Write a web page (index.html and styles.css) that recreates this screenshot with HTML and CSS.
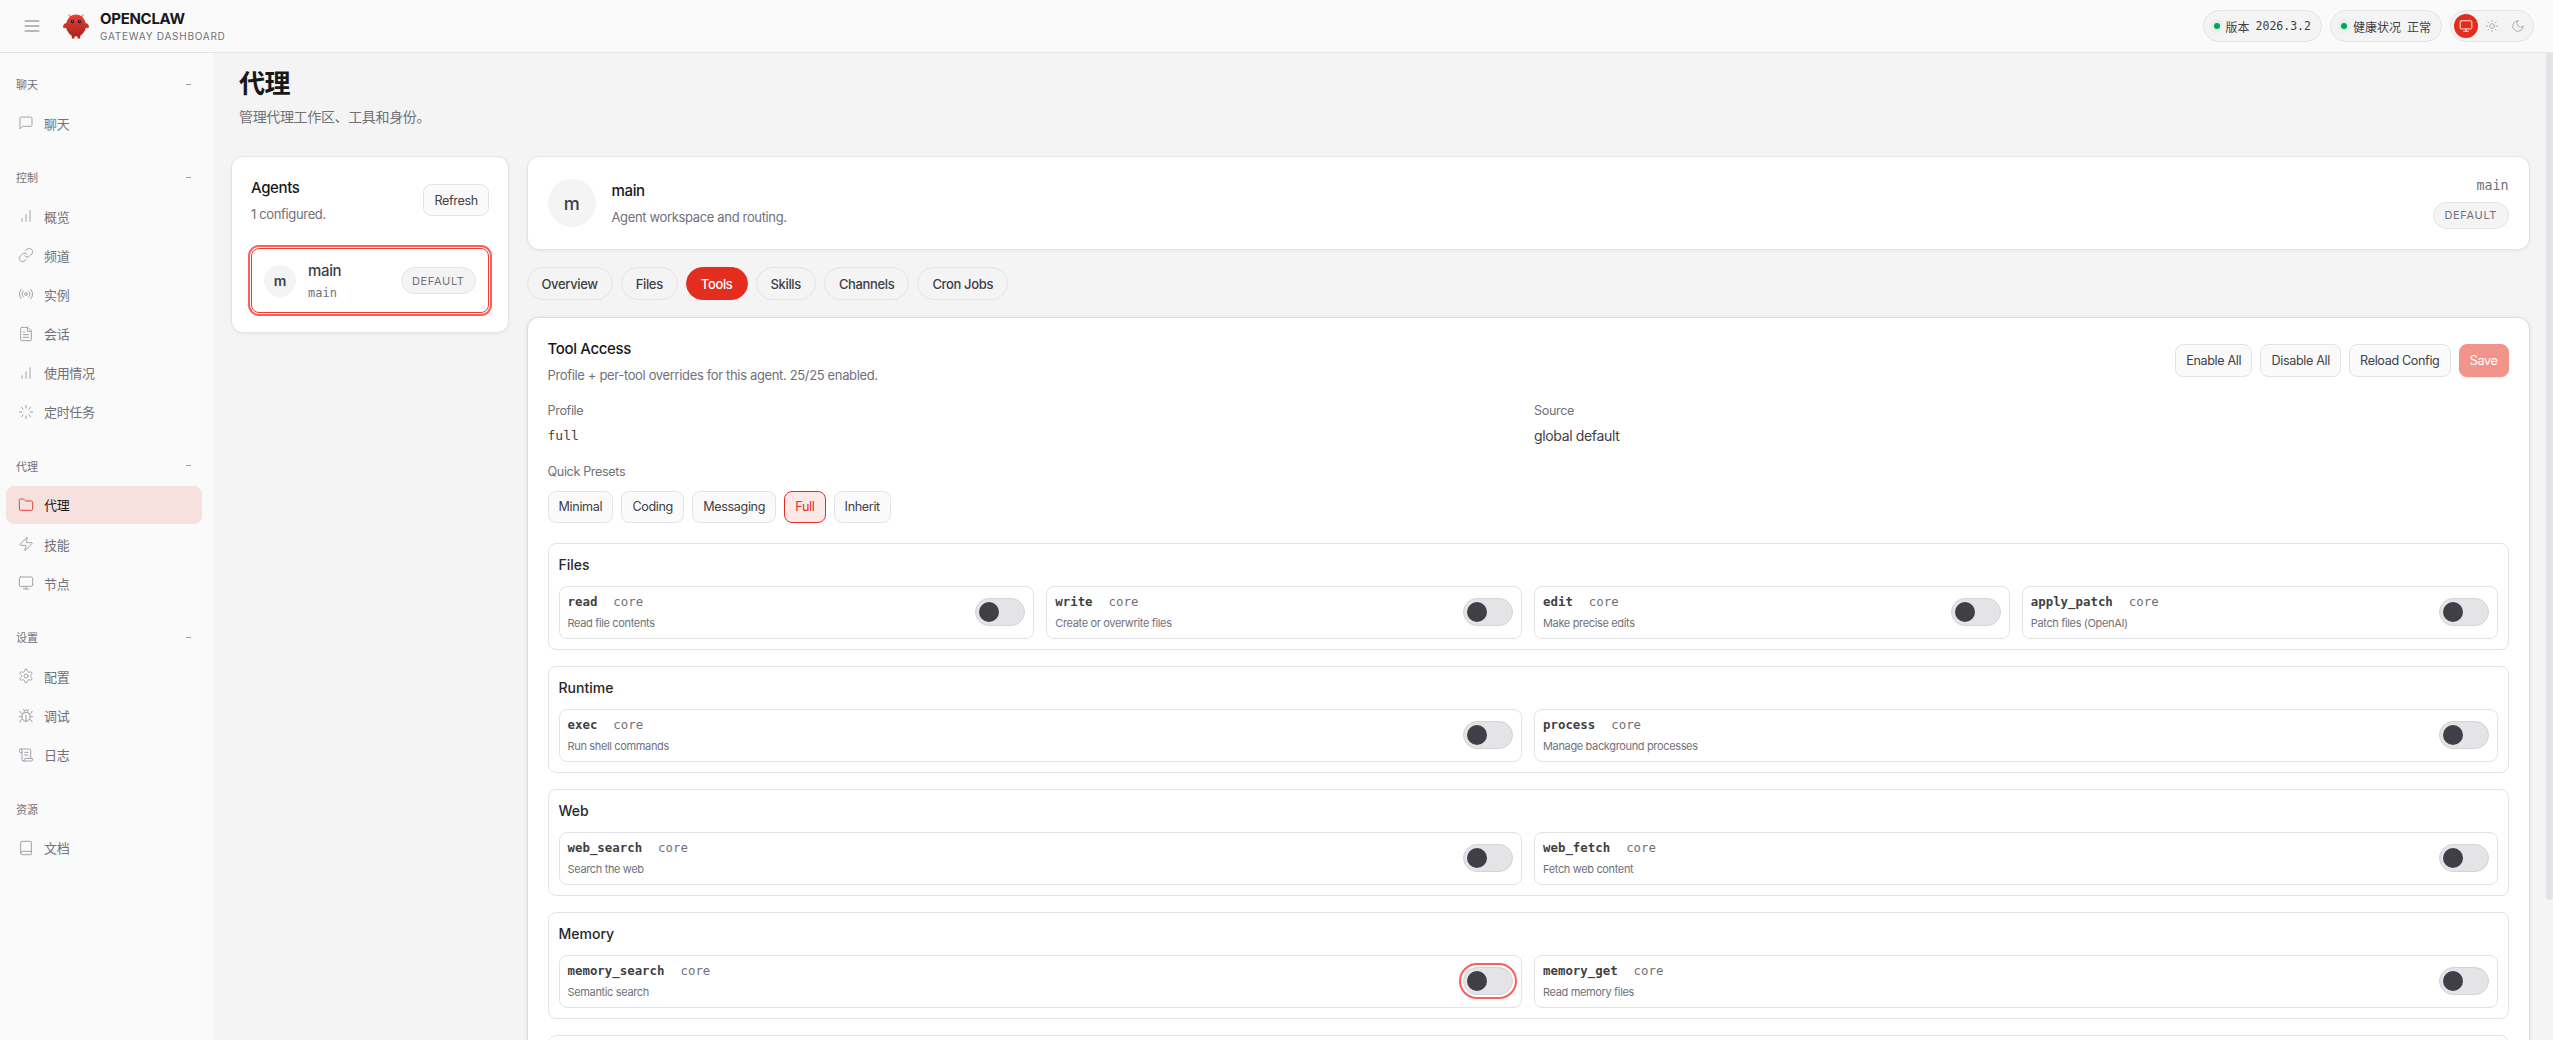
FILE: index.html
```html
<!DOCTYPE html>
<html lang="zh-CN">
<head>
    <meta charset="UTF-8">
    <title>OpenClaw Gateway Dashboard</title>
    <link rel="stylesheet" href="styles.css">
</head>
<body>
    <!-- icon sprite -->
    <svg class="sprite" xmlns="http://www.w3.org/2000/svg">
        <symbol id="i-menu" viewBox="0 0 24 24"><path d="M4 6h16M4 12h16M4 18h16"/></symbol>
        <symbol id="i-chat" viewBox="0 0 24 24"><path d="M21 15a2 2 0 0 1-2 2H7l-4 4V5a2 2 0 0 1 2-2h14a2 2 0 0 1 2 2z"/></symbol>
        <symbol id="i-bars" viewBox="0 0 24 24"><path d="M12 20V10M18 20V4M6 20v-4"/></symbol>
        <symbol id="i-link" viewBox="0 0 24 24"><path d="M10 13a5 5 0 0 0 7.54.54l3-3a5 5 0 0 0-7.07-7.07l-1.72 1.71"/><path d="M14 11a5 5 0 0 0-7.54-.54l-3 3a5 5 0 0 0 7.07 7.07l1.71-1.71"/></symbol>
        <symbol id="i-radio" viewBox="0 0 24 24"><circle cx="12" cy="12" r="2"/><path d="M4.93 19.07a10 10 0 0 1 0-14.14M7.76 16.24a6 6 0 0 1 0-8.49M16.24 7.76a6 6 0 0 1 0 8.49M19.07 4.93a10 10 0 0 1 0 14.14"/></symbol>
        <symbol id="i-file" viewBox="0 0 24 24"><path d="M14 2H6a2 2 0 0 0-2 2v16a2 2 0 0 0 2 2h12a2 2 0 0 0 2-2V8z"/><path d="M14 2v6h6M16 13H8M16 17H8M10 9H8"/></symbol>
        <symbol id="i-loader" viewBox="0 0 24 24"><path d="M12 2v4M12 18v4M4.93 4.93l2.83 2.83M16.24 16.24l2.83 2.83M2 12h4M18 12h4M4.93 19.07l2.83-2.83M16.24 7.76l2.83-2.83"/></symbol>
        <symbol id="i-folder" viewBox="0 0 24 24"><path d="M20 20a2 2 0 0 0 2-2V8a2 2 0 0 0-2-2h-7.9a2 2 0 0 1-1.69-.9L9.6 3.9A2 2 0 0 0 7.93 3H4a2 2 0 0 0-2 2v13a2 2 0 0 0 2 2Z"/></symbol>
        <symbol id="i-zap" viewBox="0 0 24 24"><path d="M4 14a1 1 0 0 1-.78-1.63l9.9-10.2a.5.5 0 0 1 .86.46l-1.92 6.02A1 1 0 0 0 13 10h7a1 1 0 0 1 .78 1.63l-9.9 10.2a.5.5 0 0 1-.86-.46l1.92-6.02A1 1 0 0 0 11 14z"/></symbol>
        <symbol id="i-monitor" viewBox="0 0 24 24"><rect x="2" y="3" width="20" height="14" rx="2"/><path d="M8 21h8M12 17v4"/></symbol>
        <symbol id="i-gear" viewBox="0 0 24 24"><path d="M12.22 2h-.44a2 2 0 0 0-2 2v.18a2 2 0 0 1-1 1.73l-.43.25a2 2 0 0 1-2 0l-.15-.08a2 2 0 0 0-2.73.73l-.22.38a2 2 0 0 0 .73 2.73l.15.1a2 2 0 0 1 1 1.72v.51a2 2 0 0 1-1 1.74l-.15.09a2 2 0 0 0-.73 2.73l.22.38a2 2 0 0 0 2.73.73l.15-.08a2 2 0 0 1 2 0l.43.25a2 2 0 0 1 1 1.73V20a2 2 0 0 0 2 2h.44a2 2 0 0 0 2-2v-.18a2 2 0 0 1 1-1.73l.43-.25a2 2 0 0 1 2 0l.15.08a2 2 0 0 0 2.73-.73l.22-.39a2 2 0 0 0-.73-2.73l-.15-.08a2 2 0 0 1-1-1.74v-.5a2 2 0 0 1 1-1.74l.15-.09a2 2 0 0 0 .73-2.73l-.22-.38a2 2 0 0 0-2.73-.73l-.15.08a2 2 0 0 1-2 0l-.43-.25a2 2 0 0 1-1-1.73V4a2 2 0 0 0-2-2z"/><circle cx="12" cy="12" r="3"/></symbol>
        <symbol id="i-bug" viewBox="0 0 24 24"><path d="m8 2 1.88 1.88M14.12 3.88 16 2M9 7.13v-1a3.003 3.003 0 1 1 6 0v1"/><path d="M12 20c-3.3 0-6-2.7-6-6v-3a4 4 0 0 1 4-4h4a4 4 0 0 1 4 4v3c0 3.3-2.7 6-6 6M12 20v-9M6.53 9C4.6 8.8 3 7.1 3 5M6 13H2M3 21c0-2.1 1.7-3.9 3.8-4M20.97 5c0 2.1-1.6 3.8-3.5 4M22 13h-4M17.2 17c2.1.1 3.8 1.9 3.8 4"/></symbol>
        <symbol id="i-scroll" viewBox="0 0 24 24"><path d="M15 12h-5M15 8h-5M19 17V5a2 2 0 0 0-2-2H4"/><path d="M8 21h12a2 2 0 0 0 2-2v-1a1 1 0 0 0-1-1H11a1 1 0 0 0-1 1v1a2 2 0 1 1-4 0V5a2 2 0 1 0-4 0v2a1 1 0 0 0 1 1h3"/></symbol>
        <symbol id="i-book" viewBox="0 0 24 24"><path d="M4 19.5v-15A2.5 2.5 0 0 1 6.5 2H19a1 1 0 0 1 1 1v18a1 1 0 0 1-1 1H6.5a1 1 0 0 1 0-5H20"/></symbol>
        <symbol id="i-sun" viewBox="0 0 24 24"><circle cx="12" cy="12" r="4"/><path d="M12 2v2M12 20v2M4.93 4.93l1.41 1.41M17.66 17.66l1.41 1.41M2 12h2M20 12h2M6.34 17.66l-1.41 1.41M19.07 4.93l-1.41 1.41"/></symbol>
        <symbol id="i-moon" viewBox="0 0 24 24"><path d="M12 3a6 6 0 0 0 9 9 9 9 0 1 1-9-9Z"/></symbol>
    </svg>

    <div class="shell">
        <header class="topbar">
            <div class="topbar-left">
                <svg class="icon menu-icon"><use href="#i-menu"/></svg>
                <svg class="logo" viewBox="0 0 28 28" xmlns="http://www.w3.org/2000/svg">
                    <defs>
                        <linearGradient id="logo-red" x1="0" y1="0" x2="0" y2="1">
                            <stop offset="0" stop-color="#ea3f36"/>
                            <stop offset="1" stop-color="#a9241e"/>
                        </linearGradient>
                    </defs>
                    <path d="M9 5 6.5 2.5M19 5l2.5-2.5" stroke="#f08a80" stroke-width="1.2" fill="none"/>
                    <path d="M5 11C2.500 11 .8 13 1 15.500c1.500 1 3.500 1 5-.5zM23 11c2.500 0 4.200 2 4 4.500-1.500 1-3.500 1-5-.5z" fill="#d8332b"/>
                    <path d="M9.500 23h3v3.500h-2.500zM15.500 23h3l-.5 3.500h-2.500z" fill="#b32820"/>
                    <ellipse cx="14" cy="13.500" rx="10" ry="11" fill="url(#logo-red)"/>
                    <circle cx="10.500" cy="9.500" r="1.700" fill="#122026"/>
                    <circle cx="17.500" cy="9.500" r="1.700" fill="#122026"/>
                    <circle cx="10.800" cy="9.100" r=".6" fill="#35d0c4"/>
                    <circle cx="17.800" cy="9.100" r=".6" fill="#35d0c4"/>
                </svg>
                <div class="brand">
                    <div class="brand-name">OPENCLAW</div>
                    <div class="brand-sub">GATEWAY DASHBOARD</div>
                </div>
            </div>
            <div class="topbar-right">
                <div class="pill"><span class="dot"></span><span>版本</span><span class="mono">2026.3.2</span></div>
                <div class="pill"><span class="dot"></span><span>健康状况</span><span>正常</span></div>
                <div class="theme-switch">
                    <span class="theme-btn active"><svg class="icon"><use href="#i-monitor"/></svg></span>
                    <span class="theme-btn"><svg class="icon"><use href="#i-sun"/></svg></span>
                    <span class="theme-btn"><svg class="icon"><use href="#i-moon"/></svg></span>
                </div>
            </div>
        </header>

        <aside class="sidebar">
            <section class="nav-group">
                <div class="nav-title"><span>聊天</span><span class="nav-minus"></span></div>
                <a class="nav-item"><svg class="icon"><use href="#i-chat"/></svg>聊天</a>
            </section>
            <section class="nav-group">
                <div class="nav-title"><span>控制</span><span class="nav-minus"></span></div>
                <a class="nav-item"><svg class="icon"><use href="#i-bars"/></svg>概览</a>
                <a class="nav-item"><svg class="icon"><use href="#i-link"/></svg>频道</a>
                <a class="nav-item"><svg class="icon"><use href="#i-radio"/></svg>实例</a>
                <a class="nav-item"><svg class="icon"><use href="#i-file"/></svg>会话</a>
                <a class="nav-item"><svg class="icon"><use href="#i-bars"/></svg>使用情况</a>
                <a class="nav-item"><svg class="icon"><use href="#i-loader"/></svg>定时任务</a>
            </section>
            <section class="nav-group">
                <div class="nav-title"><span>代理</span><span class="nav-minus"></span></div>
                <a class="nav-item active"><svg class="icon"><use href="#i-folder"/></svg>代理</a>
                <a class="nav-item"><svg class="icon"><use href="#i-zap"/></svg>技能</a>
                <a class="nav-item"><svg class="icon"><use href="#i-monitor"/></svg>节点</a>
            </section>
            <section class="nav-group">
                <div class="nav-title"><span>设置</span><span class="nav-minus"></span></div>
                <a class="nav-item"><svg class="icon"><use href="#i-gear"/></svg>配置</a>
                <a class="nav-item"><svg class="icon"><use href="#i-bug"/></svg>调试</a>
                <a class="nav-item"><svg class="icon"><use href="#i-scroll"/></svg>日志</a>
            </section>
            <section class="nav-group">
                <div class="nav-title"><span>资源</span></div>
                <a class="nav-item"><svg class="icon"><use href="#i-book"/></svg>文档</a>
            </section>
        </aside>

        <main class="content">
            <div class="page-head">
                <h1>代理</h1>
                <p>管理代理工作区、工具和身份。</p>
            </div>

            <div class="agents-layout">
                <div class="card agents-card">
                    <div class="agents-head">
                        <div>
                            <div class="card-title">Agents</div>
                            <div class="card-sub">1 configured.</div>
                        </div>
                        <button class="btn">Refresh</button>
                    </div>
                    <div class="agent-row">
                        <div class="avatar">m</div>
                        <div class="agent-info">
                            <div class="agent-name">main</div>
                            <div class="agent-id mono">main</div>
                        </div>
                        <span class="badge">DEFAULT</span>
                    </div>
                </div>

                <div class="agent-detail">
                    <div class="card agent-header">
                        <div class="avatar avatar-lg">m</div>
                        <div class="agent-header-text">
                            <div class="card-title">main</div>
                            <div class="card-sub">Agent workspace and routing.</div>
                        </div>
                        <div class="agent-header-meta">
                            <div class="mono">main</div>
                            <span class="badge">DEFAULT</span>
                        </div>
                    </div>

                    <nav class="tabs">
                        <span class="tab">Overview</span>
                        <span class="tab">Files</span>
                        <span class="tab active">Tools</span>
                        <span class="tab">Skills</span>
                        <span class="tab">Channels</span>
                        <span class="tab">Cron Jobs</span>
                    </nav>

                    <div class="card tools-card">
                        <div class="tools-head">
                            <div>
                                <div class="card-title">Tool Access</div>
                                <div class="card-sub tools-sub">Profile + per-tool overrides for this agent. 25/25 enabled.</div>
                            </div>
                            <div class="tools-actions">
                                <button class="btn">Enable All</button>
                                <button class="btn">Disable All</button>
                                <button class="btn">Reload Config</button>
                                <button class="btn btn-save">Save</button>
                            </div>
                        </div>

                        <div class="profile-grid">
                            <div>
                                <div class="field-label">Profile</div>
                                <div class="field-value mono">full</div>
                            </div>
                            <div>
                                <div class="field-label">Source</div>
                                <div class="field-value">global default</div>
                            </div>
                        </div>

                        <div class="field-label">Quick Presets</div>
                        <div class="presets">
                            <button class="btn">Minimal</button>
                            <button class="btn">Coding</button>
                            <button class="btn">Messaging</button>
                            <button class="btn btn-on">Full</button>
                            <button class="btn">Inherit</button>
                        </div>

                        <section class="tool-group">
                            <div class="group-title">Files</div>
                            <div class="tool-grid">
                                <div class="tool-row">
                                    <div class="tool-text">
                                        <div class="tool-name"><b>read</b><span>core</span></div>
                                        <div class="tool-desc">Read file contents</div>
                                    </div>
                                    <span class="toggle"></span>
                                </div>
                                <div class="tool-row">
                                    <div class="tool-text">
                                        <div class="tool-name"><b>write</b><span>core</span></div>
                                        <div class="tool-desc">Create or overwrite files</div>
                                    </div>
                                    <span class="toggle"></span>
                                </div>
                                <div class="tool-row">
                                    <div class="tool-text">
                                        <div class="tool-name"><b>edit</b><span>core</span></div>
                                        <div class="tool-desc">Make precise edits</div>
                                    </div>
                                    <span class="toggle"></span>
                                </div>
                                <div class="tool-row">
                                    <div class="tool-text">
                                        <div class="tool-name"><b>apply_patch</b><span>core</span></div>
                                        <div class="tool-desc">Patch files (OpenAI)</div>
                                    </div>
                                    <span class="toggle"></span>
                                </div>
                            </div>
                        </section>

                        <section class="tool-group">
                            <div class="group-title">Runtime</div>
                            <div class="tool-grid">
                                <div class="tool-row">
                                    <div class="tool-text">
                                        <div class="tool-name"><b>exec</b><span>core</span></div>
                                        <div class="tool-desc">Run shell commands</div>
                                    </div>
                                    <span class="toggle"></span>
                                </div>
                                <div class="tool-row">
                                    <div class="tool-text">
                                        <div class="tool-name"><b>process</b><span>core</span></div>
                                        <div class="tool-desc">Manage background processes</div>
                                    </div>
                                    <span class="toggle"></span>
                                </div>
                            </div>
                        </section>

                        <section class="tool-group">
                            <div class="group-title">Web</div>
                            <div class="tool-grid">
                                <div class="tool-row">
                                    <div class="tool-text">
                                        <div class="tool-name"><b>web_search</b><span>core</span></div>
                                        <div class="tool-desc">Search the web</div>
                                    </div>
                                    <span class="toggle"></span>
                                </div>
                                <div class="tool-row">
                                    <div class="tool-text">
                                        <div class="tool-name"><b>web_fetch</b><span>core</span></div>
                                        <div class="tool-desc">Fetch web content</div>
                                    </div>
                                    <span class="toggle"></span>
                                </div>
                            </div>
                        </section>

                        <section class="tool-group">
                            <div class="group-title">Memory</div>
                            <div class="tool-grid">
                                <div class="tool-row">
                                    <div class="tool-text">
                                        <div class="tool-name"><b>memory_search</b><span>core</span></div>
                                        <div class="tool-desc">Semantic search</div>
                                    </div>
                                    <span class="toggle focused"></span>
                                </div>
                                <div class="tool-row">
                                    <div class="tool-text">
                                        <div class="tool-name"><b>memory_get</b><span>core</span></div>
                                        <div class="tool-desc">Read memory files</div>
                                    </div>
                                    <span class="toggle"></span>
                                </div>
                            </div>
                        </section>

                        <!-- next group starts just under the fold -->
                        <section class="tool-group group-cut"></section>
                    </div>
                </div>
            </div>
            <div class="scroll-thumb"></div>
        </main>
    </div>
</body>
</html>
```

FILE: styles.css
```css
* {
    box-sizing: border-box;
}

html, body {
    margin: 0;
    height: 100%;
    overflow: hidden;
}

body {
    background: #f4f4f5;
    color: #18181b;
    font-family: Inter, "Noto Sans CJK SC", sans-serif;
    font-size: 13px;
    letter-spacing: -0.35px;
}

.sprite {
    display: none;
}

.mono {
    font-family: "DejaVu Sans Mono", "Noto Sans CJK SC", monospace;
    letter-spacing: 0;
}

.icon {
    width: 16px;
    height: 16px;
    fill: none;
    stroke: currentColor;
    stroke-width: 1.5;
    stroke-linecap: round;
    stroke-linejoin: round;
    flex-shrink: 0;
}

.shell {
    display: grid;
    grid-template-columns: 214px 1fr;
    grid-template-rows: 53px 1fr;
    height: 100vh;
}

/* top bar */
.topbar {
    grid-column: 1 / 3;
    display: flex;
    align-items: center;
    justify-content: space-between;
    padding: 0 19px 0 22px;
    background: #fafafa;
    border-bottom: 1px solid #e4e4e7;
}

.topbar-left {
    display: flex;
    align-items: center;
}

.menu-icon {
    width: 20px;
    height: 20px;
    color: #a1a1aa;
    stroke-width: 2;
    margin-right: 20px;
}

.logo {
    width: 28px;
    height: 28px;
    margin-right: 10px;
}

.brand-name {
    font-size: 15px;
    font-weight: 700;
    line-height: 18px;
    letter-spacing: -0.3px;
    color: #18181b;
}

.brand-sub {
    font-size: 10px;
    line-height: 14px;
    letter-spacing: 0.75px;
    color: #71717a;
    margin-top: 1px;
}

.topbar-right {
    display: flex;
    align-items: center;
    gap: 8px;
}

.pill {
    display: flex;
    align-items: center;
    gap: 6px;
    height: 32px;
    padding: 0 10px;
    background: #f4f4f5;
    border: 1px solid #e4e4e7;
    border-radius: 16px;
    font-size: 12px;
    letter-spacing: 0;
    color: #3f3f46;
}

.pill .mono {
    font-size: 11.500px;
}

.dot {
    width: 6px;
    height: 6px;
    border-radius: 50%;
    background: #00a84f;
    box-shadow: 0 0 6px rgba(0, 168, 79, 0.35);
}

.theme-switch {
    display: flex;
    align-items: center;
    height: 32px;
    width: 84px;
    padding: 0 3px;
    gap: 2px;
    background: #f4f4f5;
    border: 1px solid #e4e4e7;
    border-radius: 16px;
}

.theme-btn {
    display: flex;
    align-items: center;
    justify-content: center;
    width: 24px;
    height: 24px;
    border-radius: 50%;
    color: #a1a1aa;
}

.theme-btn .icon {
    width: 14px;
    height: 14px;
}

.theme-btn.active {
    background: #e32e1f;
    color: #fff;
}

/* sidebar */
.sidebar {
    background: #fafafa;
    padding-top: 17px;
}

.nav-group {
    margin-bottom: 21px;
}

.nav-title {
    display: flex;
    align-items: center;
    justify-content: space-between;
    height: 28px;
    margin-bottom: 6px;
    padding: 0 23px 0 16px;
    font-size: 11px;
    letter-spacing: 0;
    color: #71717a;
}

.nav-minus {
    width: 5px;
    height: 1px;
    background: #a1a1aa;
}

.nav-item {
    display: flex;
    align-items: center;
    gap: 10px;
    height: 38px;
    margin: 0 12px 1.200px 6px;
    padding-left: 12px;
    border-radius: 8px;
    font-size: 13px;
    color: #71717a;
}

.nav-item .icon {
    color: #a1a1aa;
}

.nav-item.active {
    background: #f6e1df;
    color: #18181b;
}

.nav-item.active .icon {
    color: #e5443a;
}

/* main area */
.content {
    position: relative;
    overflow: hidden;
    padding: 14px 23.500px 0 17px;
}

.page-head {
    padding-left: 8px;
    margin-bottom: 29px;
}

.page-head h1 {
    margin: 0;
    font-size: 26px;
    font-weight: 700;
    line-height: 34px;
    letter-spacing: -0.5px;
}

.page-head p {
    margin: 6px 0 0;
    font-size: 14px;
    line-height: 20px;
    color: #71717a;
}

.agents-layout {
    display: grid;
    grid-template-columns: 278px 1fr;
    gap: 17.500px;
    align-items: start;
}

.card {
    background: #fff;
    border: 1px solid #e4e4e7;
    border-radius: 12px;
    box-shadow: 0 1px 3px rgba(0, 0, 0, 0.06);
}

.card-title {
    font-size: 15px;
    font-weight: 500;
    line-height: 22px;
    color: #18181b;
}

.card-sub {
    font-size: 13px;
    line-height: 18px;
    color: #71717a;
    margin-top: 6px;
}

.btn {
    height: 32px;
    padding: 0 10.100px;
    background: #fafafa;
    border: 1px solid #e4e4e7;
    border-radius: 8px;
    font-family: inherit;
    font-size: 12.600px;
    font-weight: 400;
    letter-spacing: -0.35px;
    color: #3f3f46;
}

.btn-save {
    background: #f1958c;
    border-color: #f1958c;
    color: #fff;
    box-shadow: 0 1px 2px rgba(0, 0, 0, 0.08);
}

.btn-on {
    background: #fce8e6;
    border-color: #e32e1f;
    color: #e32e1f;
}

.badge {
    display: inline-flex;
    align-items: center;
    height: 27px;
    padding: 0 10.500px;
    background: #f4f4f5;
    border: 1px solid #e4e4e7;
    border-radius: 14px;
    font-family: Inter, sans-serif;
    font-size: 11px;
    letter-spacing: 0.66px;
    color: #71717a;
}

.avatar {
    display: flex;
    align-items: center;
    justify-content: center;
    width: 32px;
    height: 32px;
    border-radius: 50%;
    background: #f4f4f5;
    font-size: 14px;
    font-weight: 600;
    color: #3f3f46;
    flex-shrink: 0;
}

/* agents list */
.agents-card {
    padding: 20px 19px 19px;
}

.agents-head {
    display: flex;
    align-items: center;
    justify-content: space-between;
    margin-bottom: 25px;
}

.agent-row {
    display: flex;
    align-items: center;
    gap: 12px;
    height: 65px;
    padding: 0 12px;
    border: 1px solid #ef3b2e;
    border-radius: 8px;
    outline: 2px solid #ff5c5c;
    outline-offset: 1px;
}

.agent-info {
    flex: 1;
}

.agent-name {
    font-size: 15px;
    font-weight: 500;
    line-height: 20px;
    color: #3f3f46;
}

.agent-id {
    font-size: 12px;
    line-height: 16px;
    margin-top: 4px;
    color: #71717a;
}

/* agent detail column */
.agent-header {
    display: flex;
    align-items: center;
    gap: 16px;
    height: 94px;
    padding: 0 20px;
}

.avatar-lg {
    width: 48px;
    height: 48px;
    font-size: 18px;
    font-weight: 500;
}

.agent-header-text {
    flex: 1;
}

.agent-header-meta {
    display: flex;
    flex-direction: column;
    align-items: flex-end;
    gap: 9px;
    font-size: 13.300px;
    color: #71717a;
}

.tabs {
    display: flex;
    gap: 8px;
    margin: 17px 0 16.600px;
}

.tab {
    display: flex;
    align-items: center;
    height: 33px;
    padding: 0 14px;
    background: #f4f4f5;
    border: 1px solid #e4e4e7;
    border-radius: 17px;
    font-size: 13px;
    font-weight: 500;
    color: #3f3f46;
}

.tab.active {
    background: #e32e1f;
    border-color: #e32e1f;
    color: #fff;
}

/* tool access card */
.tools-card {
    padding: 20px;
    border-color: #dcdce0;
    box-shadow: 0 1px 4px rgba(0, 0, 0, 0.1);
}

.tools-head {
    display: flex;
    align-items: center;
    justify-content: space-between;
    margin-bottom: 19px;
}

.tools-actions {
    display: flex;
    gap: 8px;
}

.tools-actions .btn {
    height: 33px;
}

.profile-grid {
    display: grid;
    grid-template-columns: 1fr 1fr;
    gap: 12px;
    margin-bottom: 19px;
}

.field-label {
    font-size: 12.600px;
    line-height: 16px;
    color: #71717a;
}

.field-value {
    font-size: 14px;
    line-height: 18px;
    margin-top: 8px;
    color: #3f3f46;
}

.field-value.mono {
    font-size: 13px;
}

.presets {
    display: flex;
    gap: 8px;
    margin: 11px 0 20px;
}

.tool-group {
    padding: 10px;
    margin-bottom: 16px;
    border: 1px solid #e4e4e7;
    border-radius: 8px;
}

.group-cut {
    height: 107px;
}

.group-title {
    font-size: 14px;
    font-weight: 500;
    line-height: 22px;
    letter-spacing: 0;
    margin-bottom: 10px;
    color: #27272a;
}

.tool-grid {
    display: grid;
    grid-template-columns: repeat(auto-fit, minmax(420px, 1fr));
    gap: 12px;
}

.tool-row {
    display: flex;
    align-items: center;
    justify-content: space-between;
    height: 53px;
    padding: 0 8px;
    border: 1px solid #e4e4e7;
    border-radius: 8px;
}

.tool-name {
    display: flex;
    gap: 16px;
    font-family: "DejaVu Sans Mono", monospace;
    font-size: 12.400px;
    line-height: 16px;
    letter-spacing: 0;
    color: #71717a;
}

.tool-name b {
    font-weight: 700;
    color: #3f3f46;
}

.tool-desc {
    font-size: 11px;
    line-height: 14px;
    margin-top: 6px;
    color: #71717a;
}

.toggle {
    position: relative;
    width: 50px;
    height: 28px;
    background: #e4e4e7;
    border: 1px solid #d4d4d8;
    border-radius: 14px;
}

.toggle::after {
    content: '';
    position: absolute;
    top: 3px;
    left: 3px;
    width: 20px;
    height: 20px;
    border-radius: 50%;
    background: #3f3f46;
}

.toggle.focused {
    outline: 2px solid #ff5c5c;
    outline-offset: 2px;
}

.scroll-thumb {
    position: absolute;
    top: 0;
    right: 0;
    width: 7px;
    height: 847px;
    background: #e4e4e7;
    border-radius: 0 0 4px 4px;
}
```
